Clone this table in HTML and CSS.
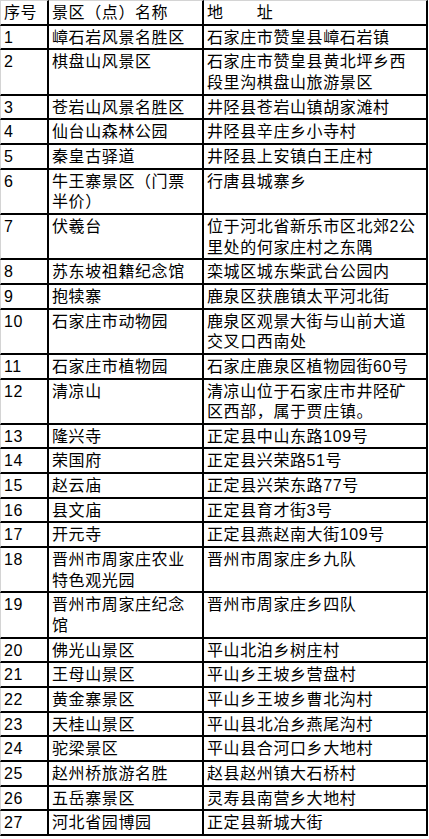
FILE: index.html
```html
<!DOCTYPE html>
<html lang="zh-CN">
<head>
<meta charset="utf-8">
<title>景区名单</title>
<link rel="stylesheet" href="styles.css">
</head>
<body>
<table class="sheet">
  <colgroup>
    <col class="c-no">
    <col class="c-name">
    <col class="c-addr">
  </colgroup>
  <thead>
    <tr><th>序号</th><th>景区（点）名称</th><th>地　　址</th></tr>
  </thead>
  <tbody>
    <tr><td>1</td><td>嶂石岩风景名胜区</td><td>石家庄市赞皇县嶂石岩镇</td></tr>
    <tr><td>2</td><td>棋盘山风景区</td><td>石家庄市赞皇县黄北坪乡西<br>段里沟棋盘山旅游景区</td></tr>
    <tr><td>3</td><td>苍岩山风景名胜区</td><td>井陉县苍岩山镇胡家滩村</td></tr>
    <tr><td>4</td><td>仙台山森林公园</td><td>井陉县辛庄乡小寺村</td></tr>
    <tr><td>5</td><td>秦皇古驿道</td><td>井陉县上安镇白王庄村</td></tr>
    <tr><td>6</td><td>牛王寨景区（门票<br>半价）</td><td>行唐县城寨乡</td></tr>
    <tr><td>7</td><td>伏羲台</td><td>位于河北省新乐市区北郊2公<br>里处的何家庄村之东隅</td></tr>
    <tr><td>8</td><td>苏东坡祖籍纪念馆</td><td>栾城区城东柴武台公园内</td></tr>
    <tr><td>9</td><td>抱犊寨</td><td>鹿泉区获鹿镇太平河北街</td></tr>
    <tr><td>10</td><td>石家庄市动物园</td><td>鹿泉区观景大街与山前大道<br>交叉口西南处</td></tr>
    <tr><td>11</td><td>石家庄市植物园</td><td>石家庄鹿泉区植物园街60号</td></tr>
    <tr><td>12</td><td>清凉山</td><td>清凉山位于石家庄市井陉矿<br>区西部，属于贾庄镇。</td></tr>
    <tr><td>13</td><td>隆兴寺</td><td>正定县中山东路109号</td></tr>
    <tr><td>14</td><td>荣国府</td><td>正定县兴荣路51号</td></tr>
    <tr><td>15</td><td>赵云庙</td><td>正定县兴荣东路77号</td></tr>
    <tr><td>16</td><td>县文庙</td><td>正定县育才街3号</td></tr>
    <tr><td>17</td><td>开元寺</td><td>正定县燕赵南大街109号</td></tr>
    <tr><td>18</td><td>晋州市周家庄农业<br>特色观光园</td><td>晋州市周家庄乡九队</td></tr>
    <tr><td>19</td><td>晋州市周家庄纪念<br>馆</td><td>晋州市周家庄乡四队</td></tr>
    <tr><td>20</td><td>佛光山景区</td><td>平山北泊乡树庄村</td></tr>
    <tr><td>21</td><td>王母山景区</td><td>平山乡王坡乡营盘村</td></tr>
    <tr><td>22</td><td>黄金寨景区</td><td>平山乡王坡乡曹北沟村</td></tr>
    <tr><td>23</td><td>天桂山景区</td><td>平山县北冶乡燕尾沟村</td></tr>
    <tr><td>24</td><td>驼梁景区</td><td>平山县合河口乡大地村</td></tr>
    <tr><td>25</td><td>赵州桥旅游名胜</td><td>赵县赵州镇大石桥村</td></tr>
    <tr><td>26</td><td>五岳寨景区</td><td>灵寿县南营乡大地村</td></tr>
    <tr><td>27</td><td>河北省园博园</td><td>正定县新城大街</td></tr>
  </tbody>
</table>
</body>
</html>
```
FILE: styles.css
```css
html, body {
  margin: 0;
  padding: 0;
  background: #ffffff;
}

.sheet {
  border-collapse: separate;
  border-spacing: 0;
  table-layout: fixed;
  width: 428px;
  font-family: "Liberation Sans", "Noto Sans CJK SC", sans-serif;
  font-size: 16px;
  letter-spacing: 0.6px;
  line-height: 20.65px;
  color: #000000;
}

.c-no { width: 49px; }
.c-name { width: 155px; }
.c-addr { width: 224px; }

.sheet th,
.sheet td {
  font-weight: normal;
  text-align: left;
  vertical-align: top;
  padding: 2px 0 0 3px;
  border-right: 2px solid #000000;
  border-bottom: 2px solid #000000;
  white-space: nowrap;
  overflow: hidden;
}

.sheet th {
  border-top: 1px solid #d4d4d4;
}

.sheet th:first-child,
.sheet td:first-child {
  border-left: 1px solid #d4d4d4;
}
```
